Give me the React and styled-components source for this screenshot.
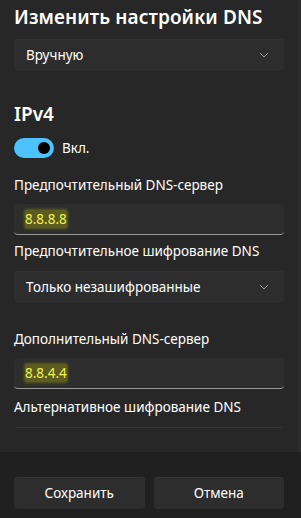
import React from "react";
import styled, { createGlobalStyle } from "styled-components";

const Global = createGlobalStyle`
  html, body {
    margin: 0;
    padding: 0;
    background: #272727;
  }
  body {
    font-family: "Noto Sans", "Open Sans", sans-serif;
    color: #ffffff;
  }
`;

const Dialog = styled.div`
  width: 301px;
  height: 518px;
  display: flex;
  flex-direction: column;
  background: #272727;
  overflow: hidden;
`;

const Body = styled.div`
  flex: 1;
  display: flex;
  padding-right: 4px;
  box-shadow: inset -4px 0 0 #2c2c2c;
`;

const Scroll = styled.div`
  flex: 1;
  height: 428px;
  overflow: hidden;
  padding: 0 13px 0 14px;
`;

const Title = styled.h1`
  margin: 5px 0 0;
  font-size: 19px;
  font-weight: 600;
  line-height: 24px;
  letter-spacing: 0.1px;
`;

const Section = styled.h2`
  margin: 31px 0 0;
  font-size: 19px;
  font-weight: 600;
  line-height: 24px;
`;

const Select = styled.div`
  margin-top: ${(p) => p.$top || 0}px;
  height: 32px;
  display: flex;
  align-items: center;
  justify-content: space-between;
  padding: 0 15px 0 12px;
  background: #2d2d2d;
  border-radius: 4px;
  box-shadow: inset 0 1px 0 #333333;
  font-size: 13.5px;
`;

const Chevron = () => (
  <svg width="10" height="6" viewBox="0 0 10 6" fill="none">
    <path d="M1 1l4 4 4-4" stroke="#9e9e9e" strokeWidth="1" />
  </svg>
);

const ToggleRow = styled.div`
  margin-top: 12px;
  display: flex;
  align-items: center;
  gap: 8px;
  font-size: 13.5px;
`;

const Toggle = styled.div`
  width: 40px;
  height: 20px;
  border-radius: 10px;
  background: #4cc2ff;
  position: relative;
  &::after {
    content: "";
    position: absolute;
    right: 4px;
    top: 4px;
    width: 12px;
    height: 12px;
    border-radius: 50%;
    background: #000000;
  }
`;

const Label = styled.div`
  margin-top: ${(p) => p.$top || 0}px;
  font-size: 13.5px;
  line-height: 20px;
  color: #ffffff;
`;

const Input = styled.div`
  margin-top: 9px;
  height: 31px;
  box-sizing: border-box;
  display: flex;
  align-items: center;
  padding: 0 11px;
  background: #2d2d2d;
  border-radius: 4px;
  border-bottom: 1px solid #9a9a9a;
  font-size: 13.5px;
`;

const Marked = styled.span`
  color: #f2f24e;
  background: rgba(150, 150, 20, 0.45);
  box-shadow: 0 0 3px 1px rgba(150, 150, 20, 0.45);
  border-radius: 2px;
`;

const CutSelect = styled.div`
  margin-top: 10px;
  height: 32px;
  background: #2d2d2d;
  border-radius: 4px;
  box-shadow: inset 0 1px 0 #383838;
`;

const Footer = styled.div`
  height: 66px;
  background: #202020;
  display: grid;
  grid-template-columns: 1fr 1fr;
  gap: 9px;
  padding: 25px 17px 0 14px;
  box-sizing: border-box;
`;

const Button = styled.button`
  height: 32px;
  border: none;
  border-radius: 4px;
  background: #2d2d2d;
  box-shadow: inset 0 1px 0 #353535;
  color: #ffffff;
  font-family: inherit;
  font-size: 13.5px;
  padding: 0;
`;

const App = () => {
  return (
    <Dialog>
      <Global />
      <Body>
        <Scroll>
          <Title>Изменить настройки DNS</Title>
          <Select $top={10}>
            <span>Вручную</span>
            <Chevron />
          </Select>
          <Section>IPv4</Section>
          <ToggleRow>
            <Toggle />
            <span>Вкл.</span>
          </ToggleRow>
          <Label $top={17}>Предпочтительный DNS-сервер</Label>
          <Input>
            <Marked>8.8.8.8</Marked>
          </Input>
          <Label $top={6}>Предпочтительное шифрование DNS</Label>
          <Select $top={10}>
            <span>Только незашифрованные</span>
            <Chevron />
          </Select>
          <Label $top={26}>Дополнительный DNS-сервер</Label>
          <Input>
            <Marked>8.8.4.4</Marked>
          </Input>
          <Label $top={8}>Альтернативное шифрование DNS</Label>
          <CutSelect />
        </Scroll>
      </Body>
      <Footer>
        <Button>Сохранить</Button>
        <Button>Отмена</Button>
      </Footer>
    </Dialog>
  );
};

export default App;
